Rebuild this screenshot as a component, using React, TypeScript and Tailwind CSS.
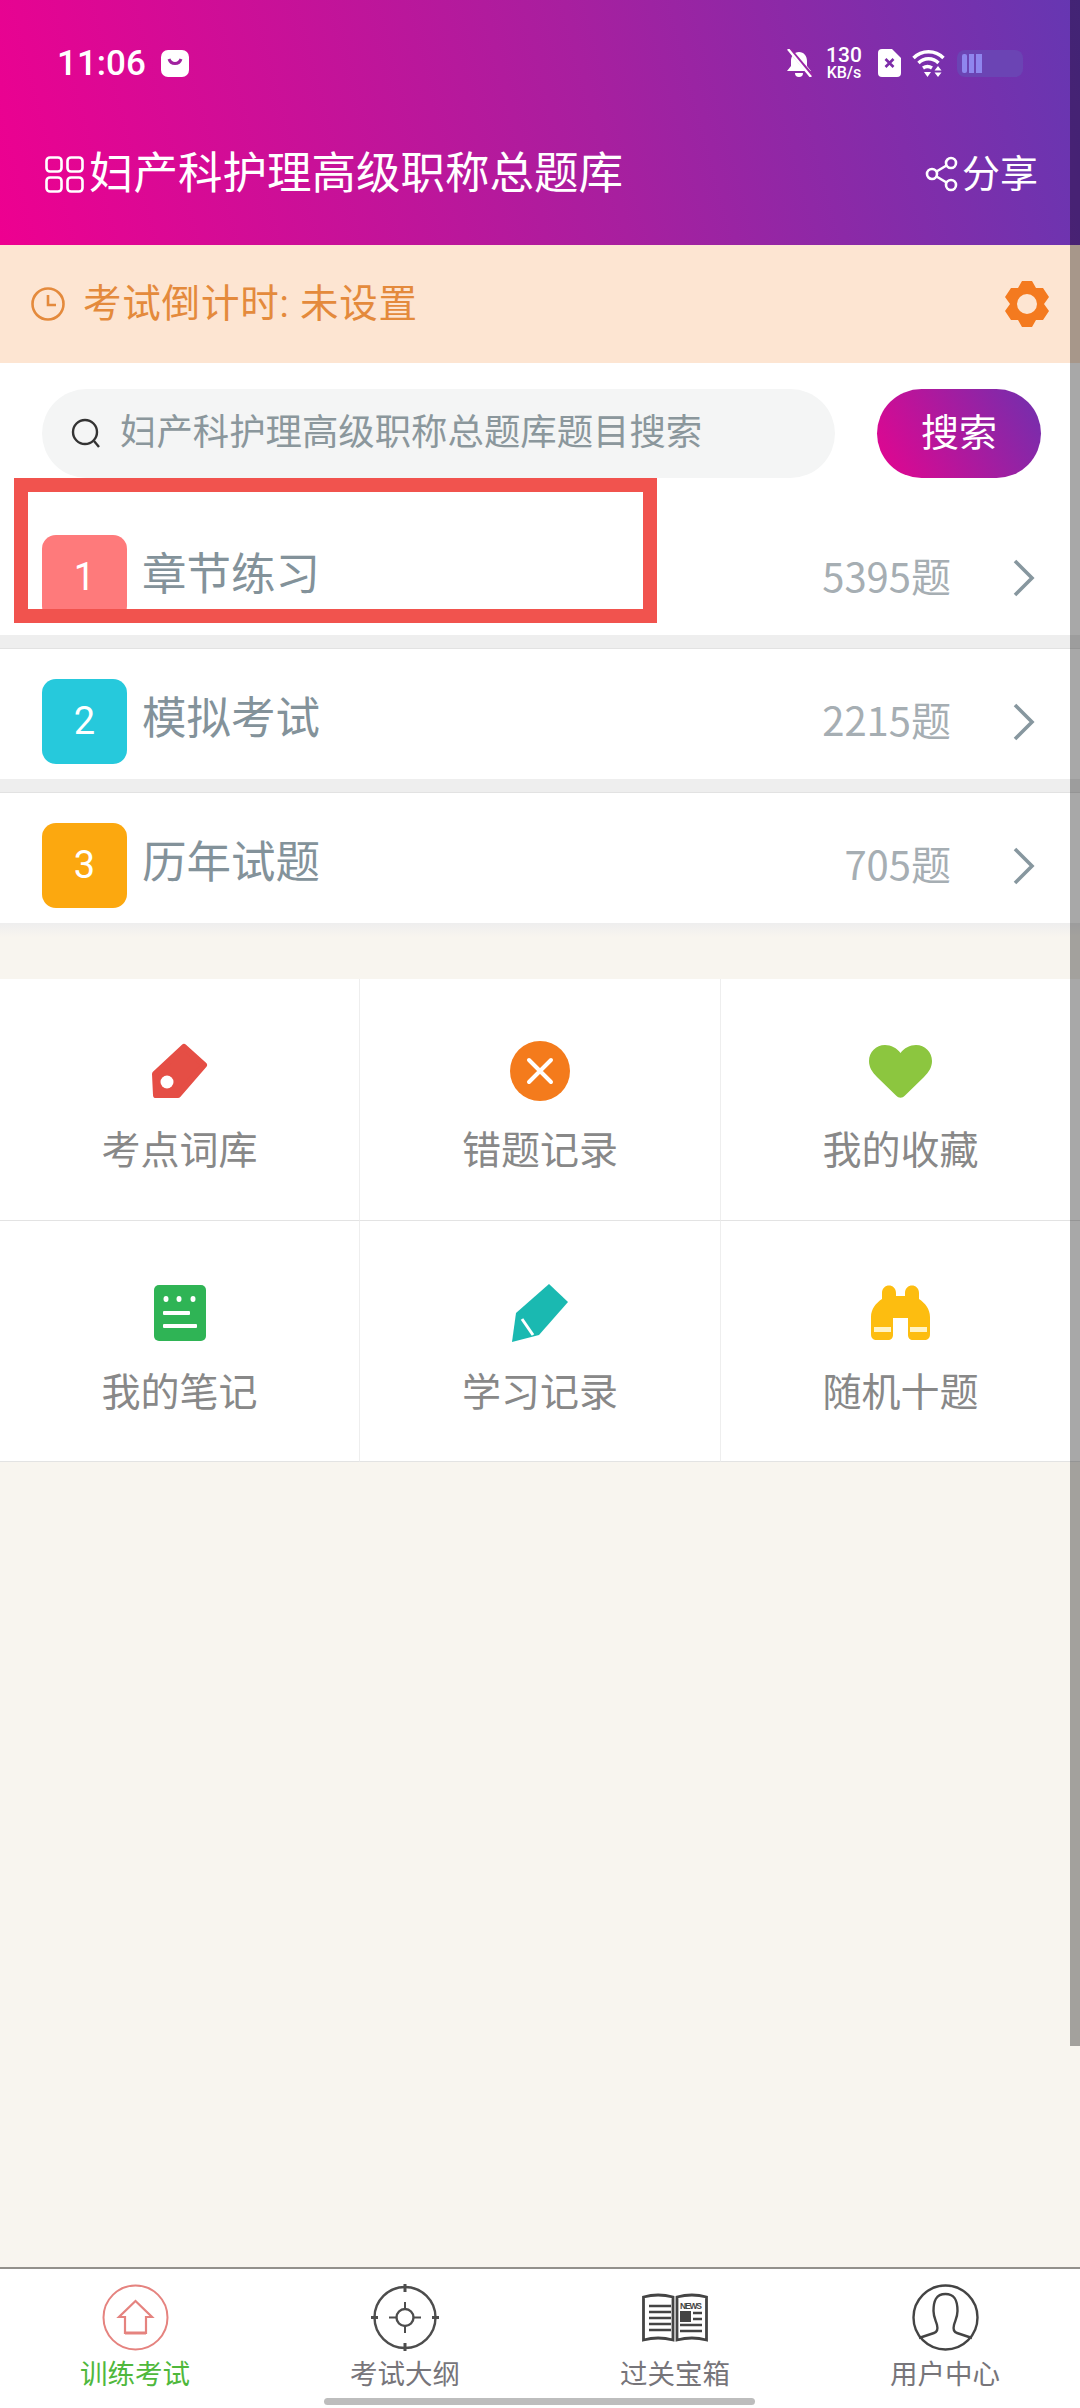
import React from "react";

type Row = { no: number; title: string; count: string; color: string; last?: boolean };

const ROWS: Row[] = [
  { no: 1, title: "章节练习", count: "5395题", color: "bg-[#fe7a7b]" },
  { no: 2, title: "模拟考试", count: "2215题", color: "bg-[#26c9dc]" },
  { no: 3, title: "历年试题", count: "705题", color: "bg-[#fca80f]", last: true },
];

/* ------------------------ STATUS BAR ICONS ------------------------ */
function StatusIcons() {
  return (
    <div className="flex items-center">
      <svg width="28" height="28" viewBox="0 0 28 28" className="mr-[13px]">
        <path d="M14 3c-5 0-8 4-8 9v5l-4 5h24l-4-5v-5c0-5-3-9-8-9z" fill="#fff" />
        <path d="M10 24a4 4 0 0 0 8 0z" fill="#fff" />
        <path d="M5 1l22 26" stroke="#9b25a6" strokeWidth="4" />
        <path d="M3 0l23 28" stroke="#fff" strokeWidth="2.4" />
      </svg>
      <div className="mr-[16px] flex w-[36px] flex-col items-center text-white">
        <span className="text-[21px] font-medium leading-[19px]">130</span>
        <span className="text-[16px] font-medium leading-[16px]">KB/s</span>
      </div>
      <svg width="23" height="28" viewBox="0 0 23 28" className="mr-[11px]">
        <path d="M4 0h10l9 9v15a4 4 0 0 1-4 4H4a4 4 0 0 1-4-4V4a4 4 0 0 1 4-4z" fill="#fff" />
        <path d="M7.500 10l8 8M15.500 10l-8 8" stroke="#7c2ba8" strokeWidth="2.600" />
      </svg>
      <svg width="33" height="28" viewBox="0 0 33 28" className="mr-[12px]">
        <path d="M1.500 9a21 21 0 0 1 30 0" stroke="#fff" strokeWidth="3.400" fill="none" />
        <path d="M6.500 14a14 14 0 0 1 20 0" stroke="#fff" strokeWidth="3.400" fill="none" />
        <path d="M11 19a8 8 0 0 1 9 0" stroke="#fff" strokeWidth="3.400" fill="none" />
        <path d="M12 23h7l-3.500 5z" fill="#fff" />
        <path d="M26 17l3.500 4.500h-7zM26 28l3.500-4.500h-7z" fill="#fff" />
      </svg>
      <div className="flex h-[27px] w-[66px] items-center gap-[2px] rounded-[8px] bg-[#6b44b4] pl-[5px]">
        <span className="h-[19px] w-[5px] rounded-[2px] bg-[#8f86ee]" />
        <span className="h-[19px] w-[5px] bg-[#8f86ee]" />
        <span className="h-[19px] w-[6px] bg-[#8f86ee]" />
      </div>
    </div>
  );
}

/* ------------------------ GRID ICONS ------------------------ */
function TagIcon() {
  return (
    <svg width="56" height="56" viewBox="0 0 56 56">
      <path
        d="M32 4L52 22L26 52H4L3 31Z"
        fill="#e54e45"
        stroke="#e54e45"
        strokeWidth="6"
        strokeLinejoin="round"
      />
      <circle cx="15" cy="39" r="6.500" fill="#fff" />
    </svg>
  );
}

function CrossIcon() {
  return (
    <svg width="60" height="60" viewBox="0 0 60 60">
      <circle cx="30" cy="30" r="30" fill="#f47b1c" />
      <path d="M19 19l22 22M41 19L19 41" stroke="#fff" strokeWidth="4" strokeLinecap="round" />
    </svg>
  );
}

function HeartIcon() {
  return (
    <svg width="63" height="53" viewBox="0 0 63 53">
      <path
        d="M31.500 8C28 3 22 0 16 0C7 0 0 7 0 16C0 22 3 27 8 32L27 50.500C30 53.500 33 53.500 36 50.500L55 32C60 27 63 22 63 16C63 7 56 0 47 0C41 0 35 3 31.500 8Z"
        fill="#8cc63f"
      />
    </svg>
  );
}

function NoteIcon() {
  return (
    <svg width="52" height="56" viewBox="0 0 52 56">
      <rect width="52" height="56" rx="5" fill="#2fb455" />
      <ellipse cx="12" cy="14" rx="2.500" ry="3" fill="#fff" />
      <ellipse cx="25" cy="14" rx="2.500" ry="3" fill="#fff" />
      <ellipse cx="39" cy="14" rx="2.500" ry="3" fill="#fff" />
      <rect x="9" y="26" width="27" height="4" rx="1" fill="#fff" />
      <rect x="9" y="39" width="34" height="4" rx="1" fill="#fff" />
    </svg>
  );
}

function PencilIcon() {
  return (
    <svg width="56" height="58" viewBox="0 0 56 58">
      <path d="M37 0L56 18L27 51L0 58L4 29Z" fill="#1ab9b1" />
      <path d="M10 35L21 51" stroke="#fff" strokeWidth="3" />
    </svg>
  );
}

function BinocularsIcon() {
  return (
    <svg width="59" height="55" viewBox="0 0 59 55">
      <path
        d="M11 8C11 -2 25 -2 25 8V11H34V8C34 -2 48 -2 48 8V14C54 18 59 24 59 32V49C59 53 57 55 53 55H42C39 55 37 53 37 50V33H22V50C22 53 20 55 17 55H6C2 55 0 53 0 49V32C0 24 5 18 11 14Z"
        fill="#fdbd10"
      />
      <rect x="3" y="42" width="17" height="5" fill="#fff3c4" />
      <rect x="39" y="42" width="17" height="5" fill="#fff3c4" />
    </svg>
  );
}

function GearIcon() {
  return (
    <svg width="46" height="50" viewBox="0 0 46 50">
      <path
        d="M18 2H28L32 9H39L45 18L40 25L45 32L39 41H32L28 48H18L14 41H7L1 32L6 25L1 18L7 9H14ZM23 15A10 10 0 1 0 23 35A10 10 0 1 0 23 15Z"
        fill="#f47a1f"
        fillRule="evenodd"
      />
    </svg>
  );
}

const GRID: { label: string; icon: React.ReactNode }[] = [
  { label: "考点词库", icon: <TagIcon /> },
  { label: "错题记录", icon: <CrossIcon /> },
  { label: "我的收藏", icon: <HeartIcon /> },
  { label: "我的笔记", icon: <NoteIcon /> },
  { label: "学习记录", icon: <PencilIcon /> },
  { label: "随机十题", icon: <BinocularsIcon /> },
];

/* ------------------------ TAB ICONS ------------------------ */
function HomeTab() {
  return (
    <svg width="67" height="67" viewBox="0 0 67 67" fill="none" stroke="#e5837f" strokeWidth="2">
      <circle cx="33.500" cy="33.500" r="32" />
      <path d="M33.500 17L17 33H23V49H44V33H50Z" strokeWidth="2.200" />
      <path d="M23 49H44" strokeWidth="3" />
    </svg>
  );
}

function TargetTab() {
  return (
    <svg width="68" height="67" viewBox="0 0 68 67" fill="none" stroke="#4d4d4d" strokeWidth="2">
      <circle cx="34" cy="33.500" r="30.500" strokeWidth="2.400" />
      <circle cx="34" cy="33.500" r="8.500" strokeWidth="2.400" />
      <path d="M34 0v8M34 59v8M0 33.500h7M61 33.500h7" strokeWidth="3" />
      <path d="M34 18v7M34 42v7M18 33.500h7M43 33.500h7" strokeWidth="2" />
    </svg>
  );
}

function NewsTab() {
  return (
    <svg width="66" height="50" viewBox="0 0 66 50">
      <path
        d="M1.500 4Q16 0 31 4V47Q16 43 1.500 47ZM64.500 4Q50 0 35 4V47Q50 43 64.500 47Z"
        fill="none"
        stroke="#444"
        strokeWidth="2.800"
      />
      <path d="M7 13H29M7 19H29M7 25H29M7 31H29M7 37H29" stroke="#444" strokeWidth="2.400" />
      <text x="38" y="16" fontSize="8.500" fontWeight="700" fill="#444" fontFamily="Liberation Sans, sans-serif" textLength="22">
        NEWS
      </text>
      <rect x="38" y="18" width="11" height="11" fill="#444" />
      <path d="M51 20H60M51 26H60M38 32H60M38 38H60" stroke="#444" strokeWidth="2.400" />
    </svg>
  );
}

function UserTab() {
  return (
    <svg width="67" height="67" viewBox="0 0 67 67" fill="none" stroke="#444" strokeWidth="2.400">
      <circle cx="33.500" cy="33.500" r="32" />
      <path d="M7 54L22 49C25 48 26 45 25 41C24 37 21.500 33 21.500 27C21.500 17 24 10 33.500 10C43 10 45.500 17 45.500 27C45.500 33 43 37 42 41C41 45 42 48 45 49L60 54" />
    </svg>
  );
}

const TABS: { label: string; icon: React.ReactNode; color: string }[] = [
  { label: "训练考试", icon: <HomeTab />, color: "text-[#4fb83c]" },
  { label: "考试大纲", icon: <TargetTab />, color: "text-[#77757a]" },
  { label: "过关宝箱", icon: <NewsTab />, color: "text-[#77757a]" },
  { label: "用户中心", icon: <UserTab />, color: "text-[#77757a]" },
];

export default function App() {
  return (
    <div className="relative flex h-[2408px] w-[1080px] flex-col overflow-hidden bg-[#f8f5ef] [font-family:Roboto,'Noto_Sans_CJK_SC',sans-serif]">
      {/* Header */}
      <header className="h-[245px] shrink-0 bg-[linear-gradient(75deg,#ee0090_0%,#a81f9f_55%,#6537b2_100%)] text-white">
        <div className="flex h-[126px] items-center justify-between pl-[57px] pr-[57px]">
          <div className="flex items-center gap-[15px]">
            <span className="text-[35px] font-medium leading-none">11:06</span>
            <svg width="28" height="27" viewBox="0 0 28 27">
              <rect width="28" height="27" rx="7" fill="#fff" />
              <path d="M8 9c2 6 10 6 12 0" stroke="#a0229f" strokeWidth="3" fill="none" />
            </svg>
          </div>
          <StatusIcons />
        </div>
        <div className="flex h-[96px] items-center justify-between pl-[45px] pr-[42px]">
          <div className="flex items-center gap-[5px]">
            <svg width="39" height="37" viewBox="0 0 39 37" fill="none" stroke="#fff" strokeWidth="2.600">
              <rect x="1.500" y="1.500" width="15" height="14" rx="3.500" />
              <rect x="22.500" y="1.500" width="15" height="14" rx="3.500" />
              <rect x="1.500" y="21.500" width="15" height="14" rx="3.500" />
              <rect x="22.500" y="21.500" width="15" height="14" rx="3.500" />
            </svg>
            <span className="text-[44.500px] leading-none">妇产科护理高级职称总题库</span>
          </div>
          <div className="flex items-center gap-[4px]">
            <svg width="33" height="36" viewBox="0 0 33 36" fill="none" stroke="#fff" strokeWidth="2.600">
              <circle cx="26" cy="7" r="5" />
              <circle cx="7" cy="18" r="5" />
              <circle cx="26" cy="29" r="5" />
              <path d="M11.500 15.500L21.500 9.500M11.500 20.500L21.500 26.500" />
            </svg>
            <span className="text-[38px] leading-none">分享</span>
          </div>
        </div>
      </header>

      {/* Countdown */}
      <div className="flex h-[118px] shrink-0 items-center justify-between bg-[#fde5d2] pl-[31px] pr-[30px]">
        <div className="flex items-center gap-[18px] text-[#e48a3c]">
          <svg width="34" height="34" viewBox="0 0 34 34" fill="none" stroke="#e48a3c" strokeWidth="2.600">
            <circle cx="17" cy="17" r="15.500" />
            <path d="M17 8V18H25" />
          </svg>
          <span className="text-[38.500px] leading-none tracking-[0.800px]">考试倒计时: 未设置</span>
        </div>
        <GearIcon />
      </div>

      {/* Search */}
      <div className="flex shrink-0 items-center justify-between bg-white pb-[27px] pl-[42px] pr-[39px] pt-[26px]">
        <div className="flex h-[89px] w-[793px] items-center gap-[18px] rounded-full bg-[#f4f5f5] pl-[29px]">
          <svg width="31" height="31" viewBox="0 0 31 31" fill="none" stroke="#333" strokeWidth="2.400">
            <circle cx="14" cy="14" r="12" />
            <path d="M23 23L28 29" />
          </svg>
          <span className="text-[36.400px] leading-none text-[#8b979c]">妇产科护理高级职称总题库题目搜索</span>
        </div>
        <button className="flex h-[89px] w-[164px] items-center justify-center rounded-full bg-[linear-gradient(60deg,#e5048f,#7030ae)] text-[38px] text-white">
          搜索
        </button>
      </div>

      {/* Practice rows */}
      <div className="shrink-0">
        {ROWS.map((row) => (
          <div key={row.no}>
            <div className="flex items-center bg-white pb-[15px] pl-[42px] pr-[45px] pt-[30px]">
              <div className={`flex h-[85px] w-[85px] items-center justify-center rounded-[14px] text-[38px] text-white ${row.color}`}>
                {row.no}
              </div>
              <span className="mb-[5px] ml-[15px] flex-1 text-[44.500px] leading-none text-[#83929a]">{row.title}</span>
              <span className="mb-[5px] text-[40px] leading-none text-[#a6aeb3] [font-family:'Noto_Sans_CJK_SC',sans-serif]">{row.count}</span>
              <svg width="23" height="38" viewBox="0 0 23 38" className="ml-[61px]" fill="none" stroke="#87979f" strokeWidth="3.600">
                <path d="M3 2L20 19L3 36" />
              </svg>
            </div>
            {row.last ? (
              <div className="h-[14px] bg-[linear-gradient(#eeeeee,#f8f5ef)]" />
            ) : (
              <div className="h-[14px] border-b border-[#e2e2e2] bg-[#eeeeee]" />
            )}
          </div>
        ))}
      </div>

      {/* Shortcut grid */}
      <div className="mt-[42px] grid shrink-0 grid-cols-[360px_361px_359px] bg-white">
        {GRID.map((cell, i) => (
          <div
            key={cell.label}
            className={`flex h-[241.500px] flex-col items-center border-b border-b-[#e3e3e3] border-r-[#eeeeee] pt-[62px] ${i % 3 !== 2 ? "border-r" : ""}`}
          >
            <div className="flex h-[60px] items-center justify-center">{cell.icon}</div>
            <span className="mt-[28px] text-[39px] leading-[44px] text-[#888888]">{cell.label}</span>
          </div>
        ))}
      </div>

      <div className="flex-1" />

      {/* Bottom tabs */}
      <nav className="grid h-[141px] shrink-0 grid-cols-4 border-t-2 border-[#93918c] bg-white pt-[15px]">
        {TABS.map((tab) => (
          <div key={tab.label} className="flex flex-col items-center">
            <div className="flex h-[67px] items-center justify-center">{tab.icon}</div>
            <span className={`mt-[8px] text-[27.500px] leading-[32px] ${tab.color}`}>{tab.label}</span>
          </div>
        ))}
      </nav>

      {/* Red highlight drawn over the first row */}
      <div className="absolute left-[14px] top-[478px] h-[145px] w-[643px] border-[14px] border-[#f1534e]" />
      {/* Scrollbar overlay */}
      <div className="absolute right-0 top-0 h-[2046px] w-[10px] bg-black/[.34]" />
      {/* Home indicator */}
      <div className="absolute left-[324px] top-[2398px] h-[7px] w-[431px] rounded-full bg-[#bdbdbd]" />
    </div>
  );
}
